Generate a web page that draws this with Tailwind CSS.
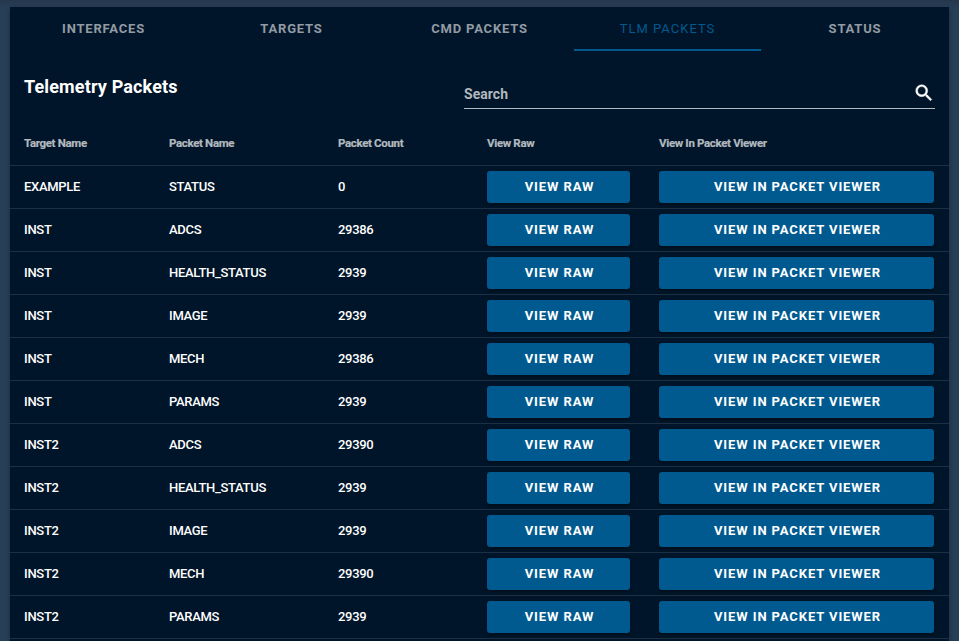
<!DOCTYPE html>
<html lang="en">
<head>
<meta charset="utf-8">
<title>Telemetry Packets</title>
<script src="https://cdn.jsdelivr.net/npm/@tailwindcss/browser@4"></script>
</head>
<body class="h-[641px] overflow-hidden bg-[#283f58] bg-linear-to-b from-[#25374d] from-0% to-[#283f58] to-[8px] px-[10px] pt-[7px] font-['Roboto',sans-serif] text-white">
<main class="h-[660px] bg-[#001529] shadow-[0_2px_5px_rgba(0,0,0,0.35)]">
  <nav class="grid h-11 grid-cols-[188px_188px_188px_187px_188px] text-[13px] font-bold tracking-[0.8px] text-[#929ba4]">
    <a class="flex items-center justify-center pr-px">INTERFACES</a>
    <a class="flex items-center justify-center pr-px">TARGETS</a>
    <a class="flex items-center justify-center pr-px">CMD PACKETS</a>
    <a class="flex items-center justify-center border-b-2 border-[#005a8f] pt-0.5 font-normal tracking-[1px] text-[#005a8f]">TLM PACKETS</a>
    <a class="flex items-center justify-center">STATUS</a>
  </nav>
  <header class="flex h-[70px] justify-between px-[14px] pt-[22px]">
    <h1 class="text-[18px] leading-7 font-bold tracking-[0.14px]">Telemetry Packets</h1>
    <div class="flex h-9 w-[471px] items-center justify-between border-b border-[#b2b9bf] pt-1">
      <span class="pt-1 text-[14px] font-bold tracking-[0.05px] text-[#b2b9bf]">Search</span>
      <svg class="size-[22px]" viewBox="0 0 24 24" fill="currentColor" stroke="currentColor" stroke-width="0.5"><path d="M9.5 3A6.5 6.5 0 0 1 16 9.5c0 1.61-.59 3.09-1.56 4.23l.27.27h.79l5 5-1.5 1.5-5-5v-.79l-.27-.27A6.516 6.516 0 0 1 9.5 16 6.5 6.5 0 0 1 3 9.5 6.5 6.5 0 0 1 9.5 3m0 2C7 5 5 7 5 9.5S7 14 9.5 14 14 12 14 9.5 12 5 9.5 5z"/></svg>
    </div>
  </header>
  <table class="w-full table-fixed border-collapse text-left">
    <colgroup><col class="w-[145px]"><col class="w-[169px]"><col class="w-[149px]"><col class="w-[172px]"><col></colgroup>
    <thead class="text-[11.5px] tracking-[-0.34px] text-[#b2b9bf] [-webkit-text-stroke:0.2px]">
      <tr class="h-[44px] border-b border-[#1c3043]">
        <th class="pt-px pl-[14px] font-bold">Target Name</th><th class="pt-px pl-[14px] font-bold">Packet Name</th><th class="pt-px pl-[14px] font-bold">Packet Count</th><th class="pt-px pl-[14px] font-bold">View Raw</th><th class="pt-px pl-[14px] font-bold">View In Packet Viewer</th>
      </tr>
    </thead>
    <tbody id="rows" class="text-[13px] font-medium tracking-[-0.3px]"></tbody>
  </table>
</main>
<script>
const packets = [
  ['EXAMPLE','STATUS',0],
  ['INST','ADCS',29386],['INST','HEALTH_STATUS',2939],['INST','IMAGE',2939],['INST','MECH',29386],['INST','PARAMS',2939],
  ['INST2','ADCS',29390],['INST2','HEALTH_STATUS',2939],['INST2','IMAGE',2939],['INST2','MECH',29390],['INST2','PARAMS',2939]
];
document.getElementById('rows').innerHTML = packets.map(([target, packet, count]) => `
  <tr class="h-[43px] border-b border-[#1c3043]">
    <td class="pl-[14px]">${target}</td><td class="pl-[14px]">${packet}</td><td class="pl-[14px]">${count}</td>
    <td class="px-[14px]"><button class="block h-8 w-[143px] rounded-[3px] bg-[#005a8f] pl-[2px] text-[13px] font-bold tracking-[0.9px] shadow-[0_2px_3px_rgba(0,0,0,0.3)]">VIEW RAW</button></td>
    <td class="px-[14px]"><button class="block h-8 w-[275px] rounded-[3px] bg-[#005a8f] pl-[2px] text-[13px] font-bold tracking-[0.9px] shadow-[0_2px_3px_rgba(0,0,0,0.3)]">VIEW IN PACKET VIEWER</button></td>
  </tr>`).join('');
</script>
</body>
</html>
